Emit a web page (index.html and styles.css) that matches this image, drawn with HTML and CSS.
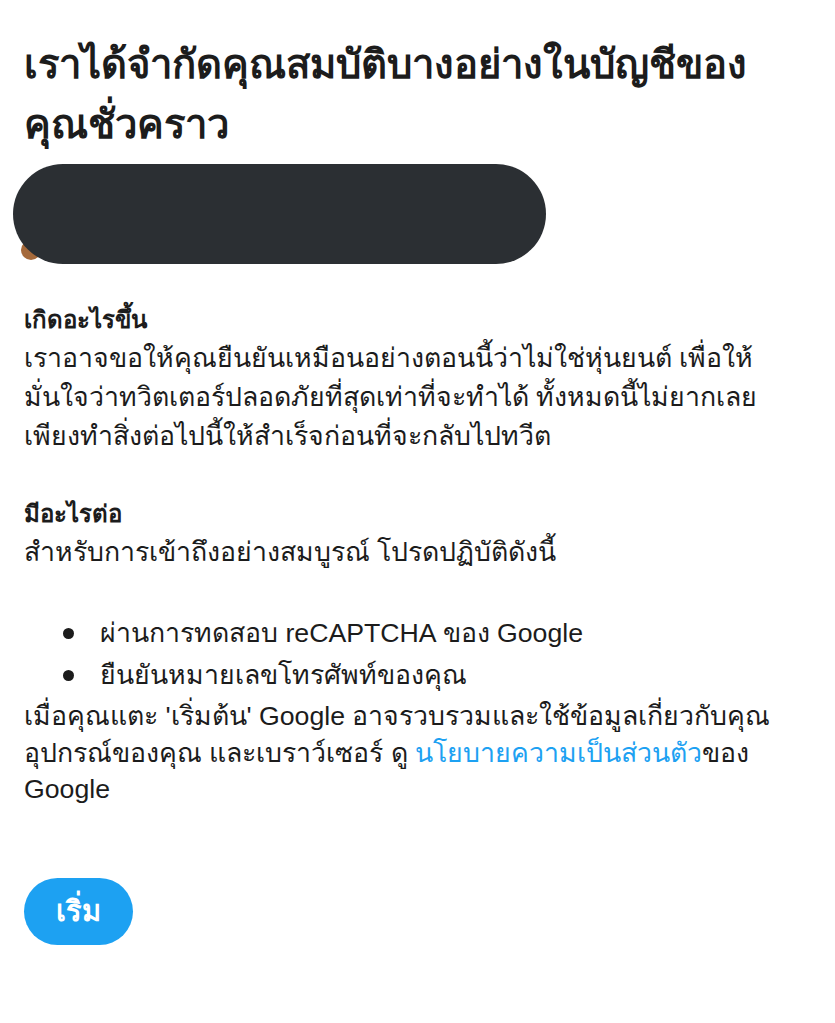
FILE: index.html
```html
<!DOCTYPE html>
<html lang="th">
<head>
<meta charset="utf-8">
<link rel="stylesheet" href="styles.css">
</head>
<body>
<main class="page">
  <h1 class="title">เราได้จำกัดคุณสมบัติบางอย่างในบัญชีของคุณชั่วคราว</h1>
  <div class="redact"><span class="avatar-peek"></span><div class="pill"></div></div>
  <h2 class="sub">เกิดอะไรขึ้น</h2>
  <p class="text">เราอาจขอให้คุณยืนยันเหมือนอย่างตอนนี้ว่าไม่ใช่หุ่นยนต์ เพื่อให้มั่นใจว่าทวิตเตอร์ปลอดภัยที่สุดเท่าที่จะทำได้ ทั้งหมดนี้ไม่ยากเลย เพียงทำสิ่งต่อไปนี้ให้สำเร็จก่อนที่จะกลับไปทวีต</p>
  <h2 class="sub sub2">มีอะไรต่อ</h2>
  <p class="text">สำหรับการเข้าถึงอย่างสมบูรณ์ โปรดปฏิบัติดังนี้</p>
  <ul class="list">
    <li>ผ่านการทดสอบ reCAPTCHA ของ Google</li>
    <li>ยืนยันหมายเลขโทรศัพท์ของคุณ</li>
  </ul>
  <p class="text text-last">เมื่อคุณแตะ 'เริ่มต้น' Google อาจรวบรวมและใช้ข้อมูลเกี่ยวกับคุณ อุปกรณ์ของคุณ และเบราว์เซอร์ ดู <a class="link" href="#">นโยบายความเป็นส่วนตัว</a>ของ Google</p>
  <button class="start">เริ่ม</button>
</main>
</body>
</html>
```
FILE: styles.css
```css
html, body { margin: 0; padding: 0; background: #fff; }
body {
  font-family: "Liberation Sans", "Noto Sans", "DejaVu Sans", sans-serif;
  color: #1c1c1c;
}
.page { padding: 0 24px; }
.title {
  margin: 0;
  padding-top: 34px;
  font-size: 40px;
  line-height: 60px;
  font-weight: 700;
  width: 760px;
}
.redact { position: relative; margin: 10px 0 0 -11px; width: 533px; height: 100px; }
.pill { position: absolute; inset: 0; background: #2b2f33; border-radius: 50px; }
.avatar-peek { position: absolute; left: 8px; top: 76px; width: 20px; height: 20px; border-radius: 50%; background: #a5693a; }
.sub { margin: 39px 0 0; font-size: 24px; line-height: 34px; font-weight: 700; }
.sub2 { margin-top: 41px; }
.text { margin: 2px 0 0; font-size: 26.7px; line-height: 39px; width: 780px; }
.text-last { line-height: 36.5px; margin-top: 2px; }
.list { list-style: none; margin: 40px 0 0; padding-left: 76px; font-size: 26.7px; line-height: 42px; }
.list li { position: relative; }
.list li::before {
  content: "";
  position: absolute;
  left: -37px; top: 16px;
  width: 11px; height: 11px;
  border-radius: 50%;
  background: #1c1c1c;
}
.link { color: #1da1f2; text-decoration: none; }
.start {
  display: block;
  margin-top: 70px;
  width: 109px; height: 67px;
  border: none; border-radius: 34px;
  background: #1da1f2; color: #fff;
  font-family: inherit; font-size: 29px; font-weight: 700;
  padding: 0;
}
```
